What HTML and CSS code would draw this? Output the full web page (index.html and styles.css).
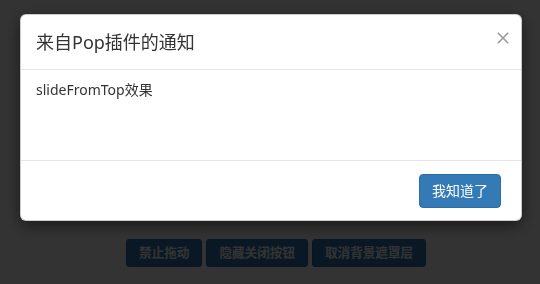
FILE: index.html
```html
<!DOCTYPE html>
<html lang="zh-CN">
<head>
<meta charset="utf-8">
<title>Pop</title>
<link rel="stylesheet" href="styles.css">
</head>
<body>
<div class="page">
  <div class="actions">
    <button class="btn btn-sm">禁止拖动</button>
    <button class="btn btn-sm">隐藏关闭按钮</button>
    <button class="btn btn-sm">取消背景遮罩层</button>
  </div>
</div>
<div class="backdrop"></div>
<div class="modal">
  <div class="modal-header">
    <h4 class="modal-title">来自Pop插件的通知</h4>
    <span class="close" aria-label="关闭">
      <svg width="12" height="12" viewBox="0 0 12 12"><path d="M0.8 0.8 L11.2 11.2 M11.2 0.8 L0.8 11.2" stroke="#9a9a9a" stroke-width="1.6" fill="none"/></svg>
    </span>
  </div>
  <div class="modal-body">slideFromTop效果</div>
  <div class="modal-footer">
    <button class="btn btn-ok">我知道了</button>
  </div>
</div>
</body>
</html>
```
FILE: styles.css
```css
html, body {
  margin: 0;
  padding: 0;
}
body {
  background: #fff;
  font-family: "Noto Sans", "Noto Sans CJK SC", sans-serif;
  color: #333;
  width: 540px;
  height: 284px;
  overflow: hidden;
}
.page {
  padding: 239px 0 0 126px;
}
.actions {
  display: flex;
  gap: 4px;
}
.btn {
  font-family: "Noto Sans", "Noto Sans CJK SC", sans-serif;
  background: #337ab7;
  border: 1px solid #2e6da4;
  color: #fff;
  cursor: pointer;
  margin: 0;
}
.btn-sm {
  font-size: 12.6px;
  font-weight: bold;
  line-height: 18px;
  padding: 4px 12px;
  border-radius: 3px;
}
.backdrop {
  position: fixed;
  inset: 0;
  background: rgba(0, 0, 0, 0.8);
}
.modal {
  position: fixed;
  top: 14px;
  left: 20px;
  width: 502px;
  box-sizing: border-box;
  background: #fff;
  border: 1px solid rgba(0, 0, 0, 0.2);
  border-radius: 6px;
  box-shadow: 0 5px 15px rgba(0, 0, 0, 0.5);
}
.modal-header {
  height: 54px;
  box-sizing: content-box;
  padding: 0 12px 0 15px;
  border-bottom: 1px solid #e5e5e5;
  display: flex;
  justify-content: space-between;
  align-items: flex-start;
}
.modal-title {
  margin: 14px 0 0;
  font-size: 18px;
  font-weight: normal;
  line-height: 26px;
  color: #333;
}
.close {
  margin-top: 17px;
  width: 12px;
  height: 12px;
  display: block;
}
.close svg {
  display: block;
}
.modal-body {
  height: 90px;
  box-sizing: border-box;
  padding: 10px 15px;
  font-size: 14px;
  line-height: 20px;
}
.modal-footer {
  border-top: 1px solid #e5e5e5;
  height: 60px;
  box-sizing: border-box;
  padding: 13px 20px;
  display: flex;
  justify-content: flex-end;
}
.btn-ok {
  font-size: 14px;
  line-height: 20px;
  padding: 6px 12px;
  border-radius: 4px;
  height: 34px;
}
```
